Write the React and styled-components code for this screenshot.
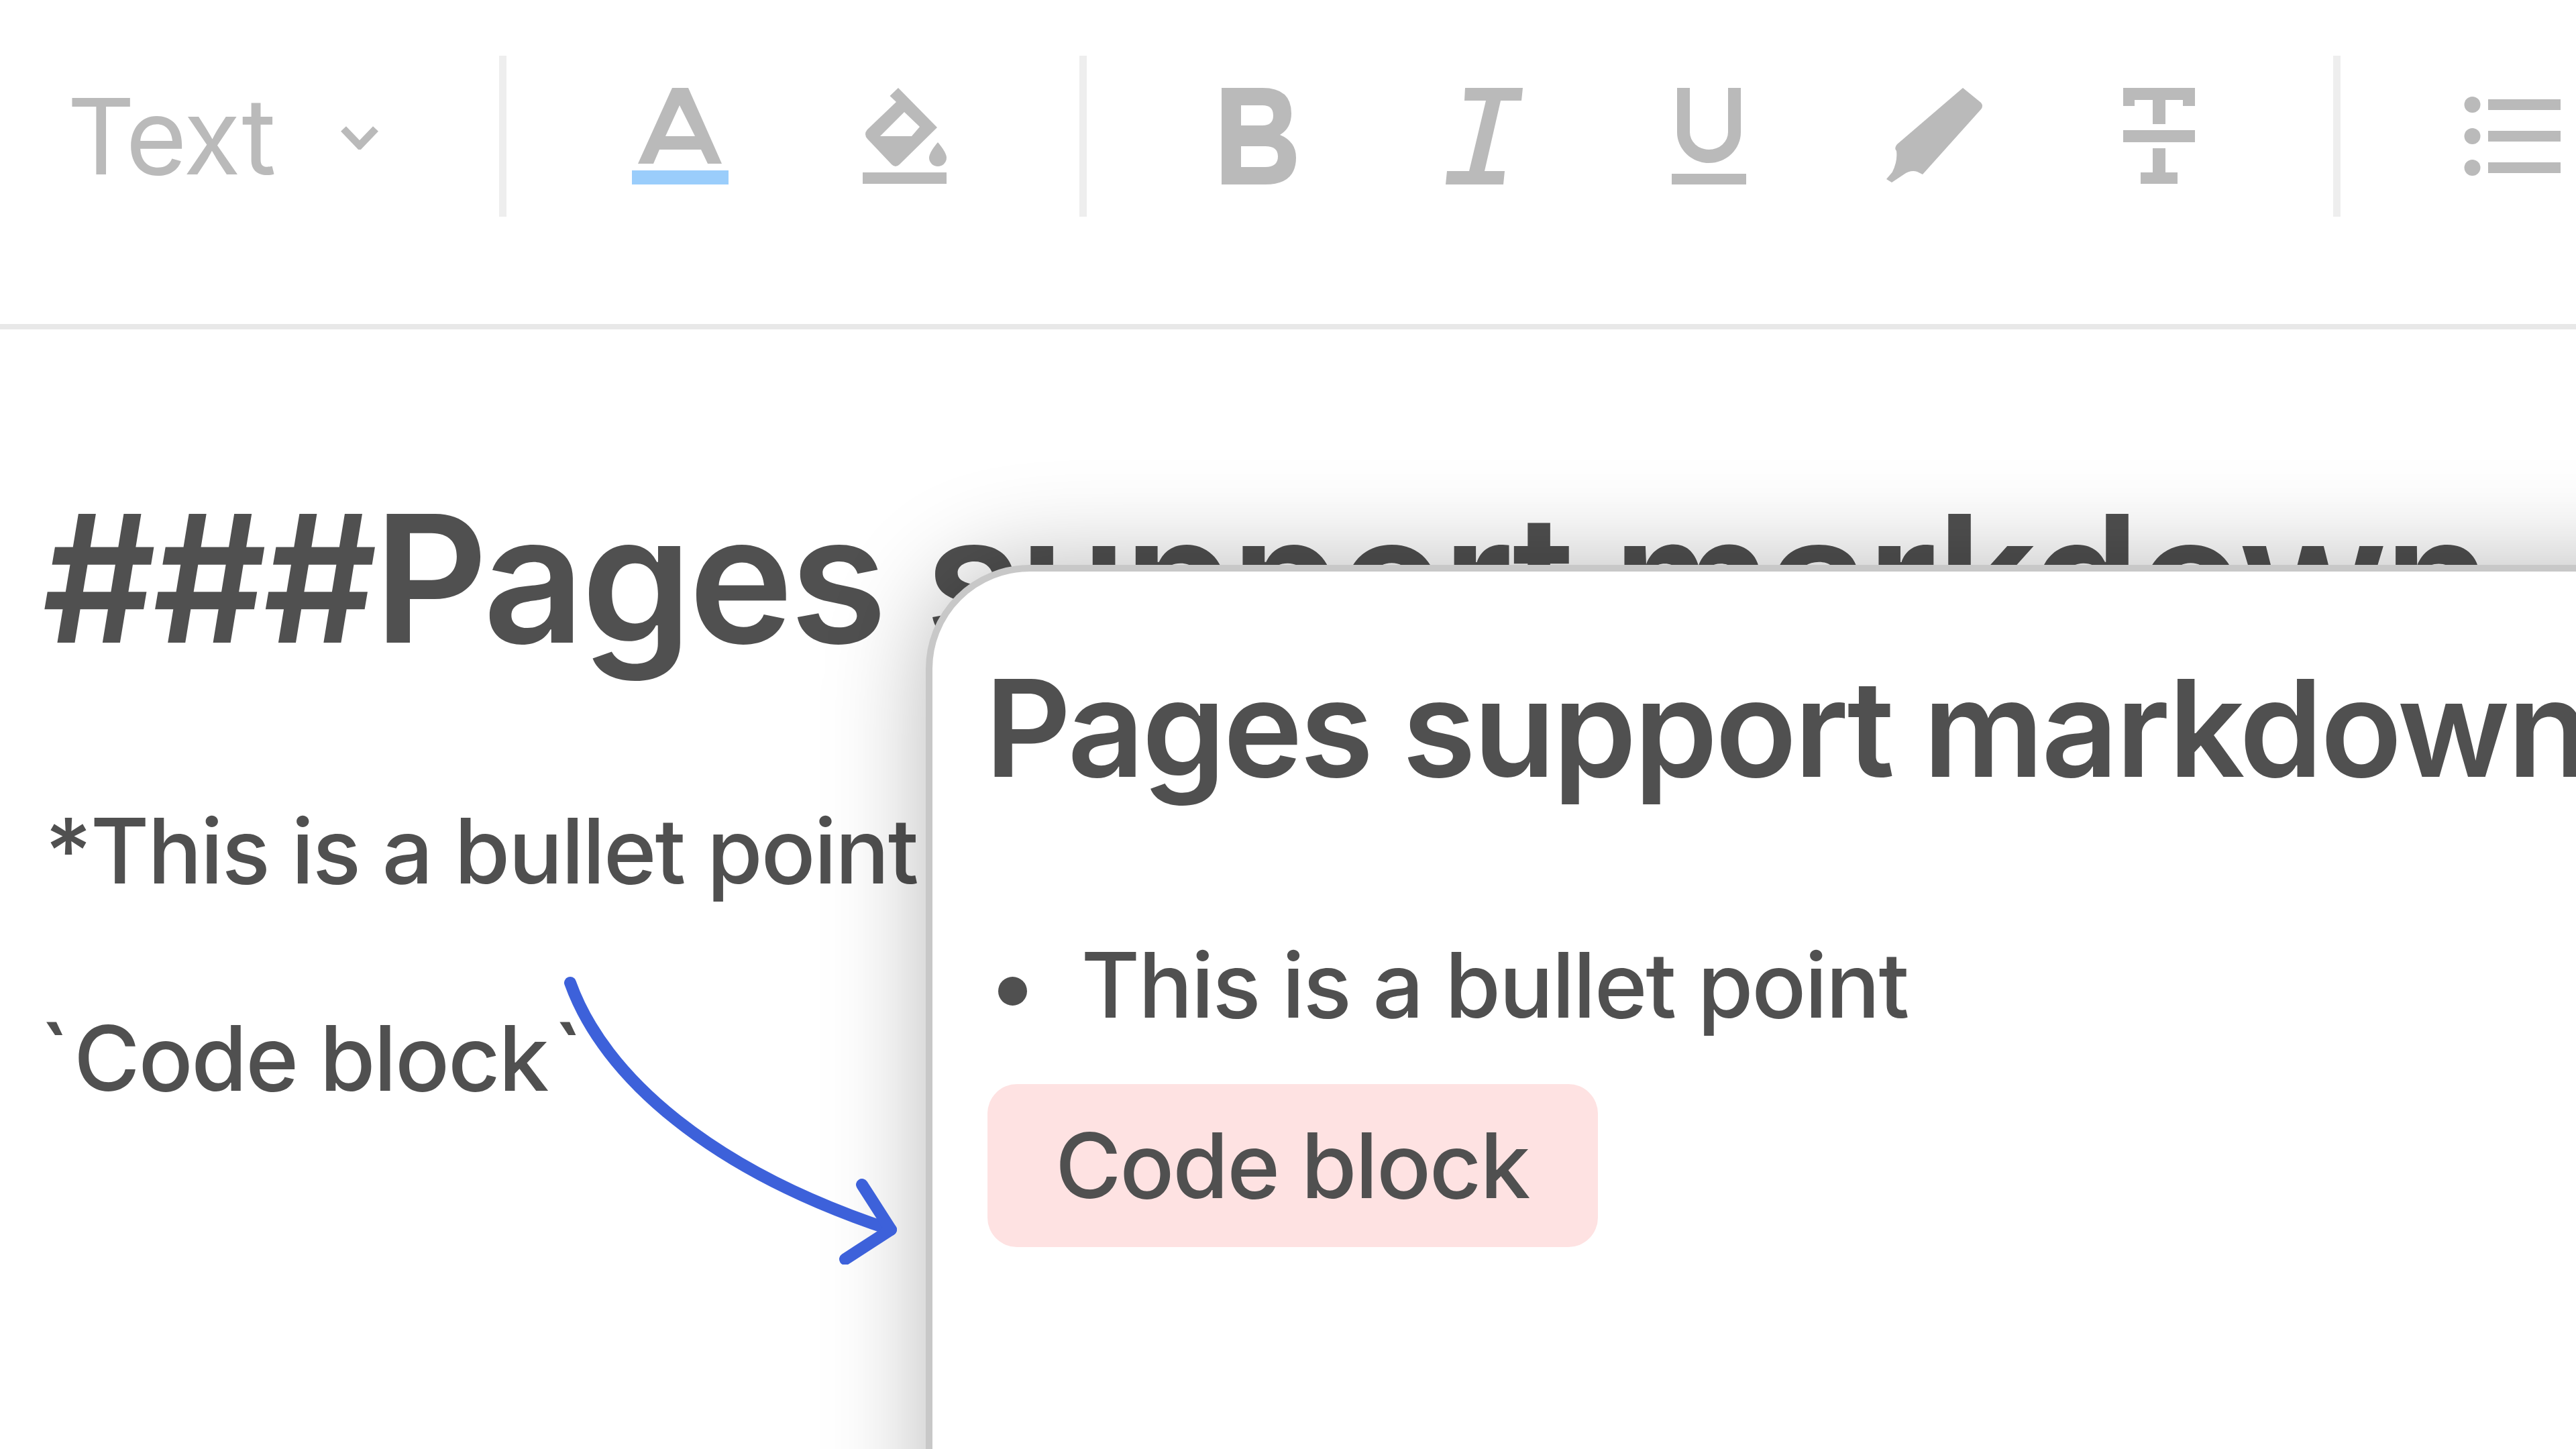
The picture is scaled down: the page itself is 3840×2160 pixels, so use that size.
import React from "react";
import styled, { createGlobalStyle } from "styled-components";

const Global = createGlobalStyle`
  html, body { margin: 0; padding: 0; background: #fff; }
  body { font-family: Inter, "Liberation Sans", sans-serif; color: #505050; }
`;

const Page = styled.div`
  position: relative;
  width: 3840px;
  height: 2160px;
  overflow: hidden;
  background: #fff;
`;

const Toolbar = styled.div`
  display: flex;
  align-items: flex-start;
  height: 400px;
  padding-top: 83px;
  border-bottom: 8px solid #e8e8e8;
`;

const Group = styled.div`
  display: flex;
  flex: none;
  align-items: center;
  height: 240px;
  padding: 0 91.5px 0 ${(p) => p.$left}px;
`;

const StyleSelect = styled.div`
  display: flex;
  flex: none;
  align-items: center;
  gap: 98px;
  height: 240px;
  width: 744px;
  padding-left: 100px;
  box-sizing: border-box;
`;

const SelectLabel = styled.span`
  font-size: 157px;
  font-weight: 440;
  line-height: 1;
  letter-spacing: -0.012em;
  color: #bababa;
`;

const Divider = styled.div`
  flex: none;
  width: 11px;
  height: 240px;
  background: #eeeeee;
`;

const Tool = styled.div`
  display: flex;
  flex: none;
  align-items: center;
  justify-content: center;
  width: 335.5px;
`;

const Glyph = styled.svg`
  display: block;
  width: 144px;
  height: 144px;
  fill: #bababa;
`;

const Chevron = styled.svg`
  display: block;
  flex: none;
  width: 56px;
  height: 36px;
  margin-top: 4px;
  fill: none;
  stroke: #bababa;
  stroke-width: 11;
`;

const Editor = styled.div`
  padding: 211px 0 0 59px;
`;

const SourceHeading = styled.h1`
  margin: 0 0 0 4px;
  font-size: 264px;
  line-height: 320px;
  font-weight: 600;
  letter-spacing: -0.0195em;
  white-space: nowrap;
`;

const SourceLine = styled.p`
  margin: ${(p) => p.$top}px 0 0 ${(p) => p.$left}px;
  font-size: 134.5px;
  font-weight: 453;
  line-height: 155px;
  letter-spacing: -0.017em;
  white-space: nowrap;
`;

const Tick = styled.span`
  margin: 0 ${(p) => p.$after}px 0 ${(p) => p.$before}px;
`;

const Preview = styled.div`
  position: absolute;
  left: 1380px;
  top: 842px;
  width: 2800px;
  height: 1700px;
  box-sizing: border-box;
  padding: 113px 0 0 82px;
  background: #fff;
  border: 10px solid #c8c8c8;
  border-radius: 155px;
  box-shadow: 0 0 150px rgba(0, 0, 0, 0.28);
`;

const PreviewHeading = styled.h2`
  margin: 0 0 0 -4px;
  font-size: 200px;
  line-height: 240px;
  font-weight: 600;
  letter-spacing: -0.0195em;
  white-space: nowrap;
`;

const BulletList = styled.ul`
  margin: 185.6px 0 0;
  padding: 0;
  list-style: none;
`;

const BulletItem = styled.li`
  display: flex;
  align-items: center;
  gap: 81px;
  padding-left: 15.5px;
  font-size: 134.5px;
  font-weight: 453;
  line-height: 155px;
  letter-spacing: -0.017em;
  white-space: nowrap;
`;

const Dot = styled.span`
  flex: none;
  width: 43px;
  height: 43px;
  margin-top: 18px;
  border-radius: 50%;
  background: #505050;
`;

const CodeBlock = styled.div`
  display: flex;
  align-items: center;
  width: 910px;
  height: 243px;
  margin-top: 70px;
  box-sizing: border-box;
  padding-left: 101px;
  border-radius: 44px;
  background: #fee2e2;
  font-size: 134.5px;
  font-weight: 453;
  line-height: 155px;
  letter-spacing: -0.017em;
`;

const Arrow = styled.svg`
  position: absolute;
  left: 840px;
  top: 1455px;
  width: 510px;
  height: 430px;
  fill: none;
  stroke: #3d61da;
  stroke-width: 18;
  stroke-linecap: round;
  stroke-linejoin: round;
`;

const TextColorIcon = () => (
  <Glyph viewBox="0 0 144 144">
    <path fillRule="evenodd" d="M9 113 L60 0 H84 L134 113 H113 L103 92 H41 L32 113 Z M71 26 L50 72 H94 Z" />
    <rect y="123" width="144" height="21" fill="#9acdfb" />
  </Glyph>
);

const FillIcon = () => (
  <Glyph viewBox="0 0 144 144">
    <path fillRule="evenodd" d="M62 0 L49.5 12 L59 21 L16 62 Q10 69 16 76 L52 114 Q58 120 64 114 L120 59 Z M71 36 L94 58 L82 72 H35 Z" />
    <path d="M121 81 C121 81 108 96 108 104 A13 13 0 0 0 134 104 C134 96 121 81 121 81 Z" />
    <rect x="9" y="126" width="125" height="17" />
  </Glyph>
);

const BoldIcon = () => (
  <Glyph viewBox="0 0 144 144">
    <path fillRule="evenodd" d="M17 0 H78 Q121 0 121 38 Q121 60 104 70 Q128 80 128 104 Q128 144 82 144 H17 Z M46 26 V56 H78 Q94 56 94 41 Q94 26 78 26 Z M46 87 V118 H82 Q101 118 101 102 Q101 87 82 87 Z" />
  </Glyph>
);

const ItalicIcon = () => (
  <Glyph viewBox="0 0 144 144">
    <path d="M44 0 H130 L128 19 H97 L73 124 H103 L101 144 H15 L17 124 H50 L75 19 H43 Z" />
  </Glyph>
);

const UnderlineIcon = () => (
  <Glyph viewBox="0 0 144 144">
    <path d="M25 0 H44 V66 A28.5 26 0 0 0 101 66 V0 H120 V66 A47.5 46 0 0 1 25 66 Z" />
    <rect x="17" y="128" width="111" height="16" />
  </Glyph>
);

const HighlightIcon = () => (
  <Glyph viewBox="0 0 144 144">
    <path d="M115 0 L142 22 Q146 27 142 32 L55 129 L47 125 Q37 122 27 129 L9 141 L1 136 L9.5 126 Q18 110 16 94 Q12 90 17 84 Z" />
  </Glyph>
);

const StrikeIcon = () => (
  <Glyph viewBox="0 0 144 144">
    <path d="M19 0 H126 V27 H108 V18 H82 V54 H63 V18 H36 V27 H19 Z" />
    <rect x="19" y="63" width="107" height="18" />
    <path d="M63 90 H82 V126 H100 V143 H45 V126 H63 Z" />
  </Glyph>
);

const ListIcon = () => (
  <Glyph viewBox="0 0 144 144">
    <circle cx="12.5" cy="25" r="12" />
    <circle cx="12.5" cy="72" r="12" />
    <circle cx="12.5" cy="119" r="12" />
    <rect x="36" y="17" width="108" height="16" />
    <rect x="36" y="64" width="108" height="16" />
    <rect x="36" y="111" width="108" height="16" />
  </Glyph>
);

export default function App() {
  return (
    <Page>
      <Global />
      <Toolbar>
        <StyleSelect>
          <SelectLabel>Text</SelectLabel>
          <Chevron viewBox="0 0 56 36">
            <path d="M4 5 L28 30 L52 5" />
          </Chevron>
        </StyleSelect>
        <Divider />
        <Group $left={91}>
          <Tool><TextColorIcon /></Tool>
          <Tool><FillIcon /></Tool>
        </Group>
        <Divider />
        <Group $left={89}>
          <Tool><BoldIcon /></Tool>
          <Tool><ItalicIcon /></Tool>
          <Tool><UnderlineIcon /></Tool>
          <Tool><HighlightIcon /></Tool>
          <Tool><StrikeIcon /></Tool>
        </Group>
        <Divider />
        <Group $left={89}>
          <Tool><ListIcon /></Tool>
        </Group>
      </Toolbar>
      <Editor>
        <SourceHeading>###Pages support markdown</SourceHeading>
        <SourceLine $top={169} $left={8}>*This is a bullet point</SourceLine>
        <SourceLine $top={154} $left={0}>
          <Tick $before={0} $after={8}>`</Tick>Code block<Tick $before={8} $after={0}>`</Tick>
        </SourceLine>
      </Editor>
      <Preview>
        <PreviewHeading>Pages support markdown</PreviewHeading>
        <BulletList>
          <BulletItem><Dot />This is a bullet point</BulletItem>
        </BulletList>
        <CodeBlock>Code block</CodeBlock>
      </Preview>
      <Arrow viewBox="0 0 510 430">
        <path d="M10 10 C60 150 220 290 488 378" />
        <path d="M445 311 L488 378 L420 422" />
      </Arrow>
    </Page>
  );
}
